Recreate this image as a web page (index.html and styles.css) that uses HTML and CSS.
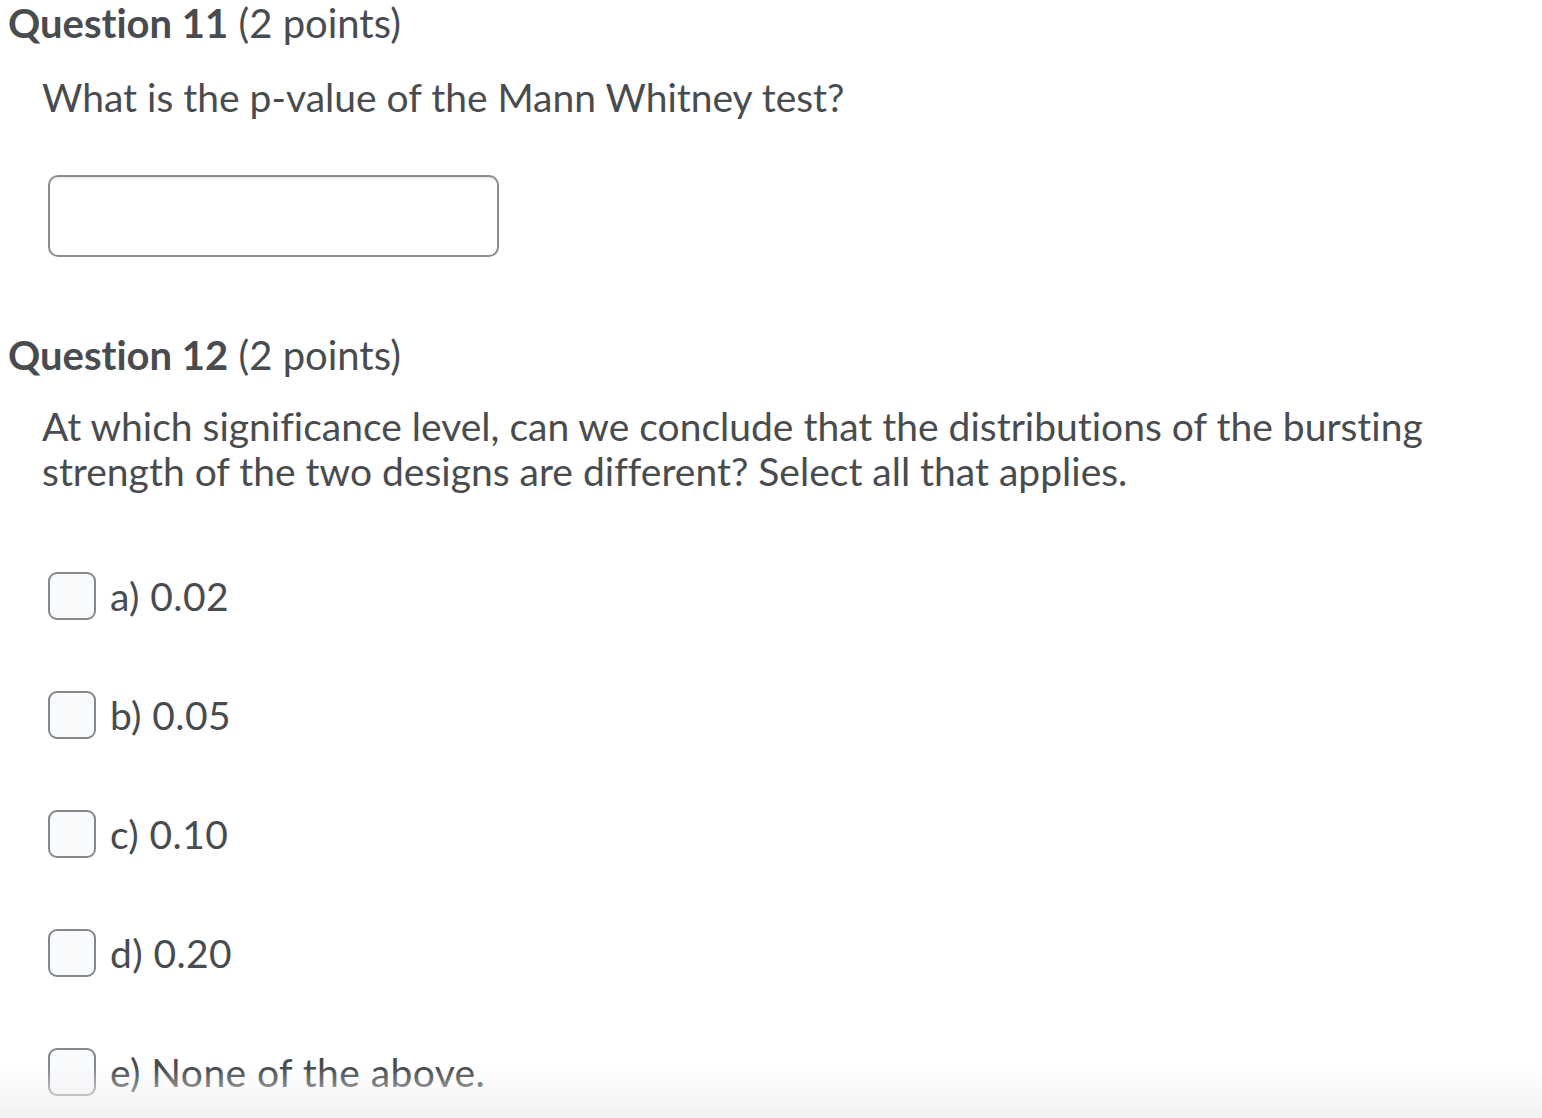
FILE: index.html
```html
<!DOCTYPE html>
<html>
<head>
<meta charset="utf-8">
<link rel="stylesheet" href="styles.css">
</head>
<body>
<div class="page">
  <section class="question q11">
    <h2 class="qhead"><span class="qnum">Question 11</span> (2 points)</h2>
    <div class="qbody">
      <p class="qtext">What is the p-value of the Mann Whitney test?</p>
      <div class="answer-box"></div>
    </div>
  </section>
  <section class="question q12">
    <h2 class="qhead"><span class="qnum">Question 12</span> (2 points)</h2>
    <div class="qbody">
      <p class="qtext">At which significance level, can we conclude that the distributions of the bursting strength of the two designs are different? Select all that applies.</p>
      <ul class="options">
        <li class="option"><span class="check"></span><span class="label">a) 0.02</span></li>
        <li class="option"><span class="check"></span><span class="label">b) 0.05</span></li>
        <li class="option"><span class="check"></span><span class="label">c) 0.10</span></li>
        <li class="option"><span class="check"></span><span class="label">d) 0.20</span></li>
        <li class="option"><span class="check"></span><span class="label">e) None of the above.</span></li>
      </ul>
    </div>
  </section>
</div>
<div class="fade"></div>
</body>
</html>
```
FILE: styles.css
```css
html, body {
  margin: 0;
  padding: 0;
  background: #ffffff;
  height: 100%;
  overflow: hidden;
}
body {
  font-family: Lato, "Open Sans", sans-serif;
  color: #494c4e;
  font-variant-ligatures: none;
}
.page {
  padding: 0 0 0 8px;
}
.qhead {
  margin: 0;
  font-size: 40px;
  font-weight: 400;
  line-height: 46px;
}
.qnum {
  font-weight: 700;
}
.qbody {
  padding-left: 34px;
}
.qtext {
  margin: 0;
  font-size: 39px;
  line-height: 45px;
}
.q11 .qtext {
  margin-top: 28px;
  line-height: 46px;
}
.answer-box {
  margin-top: 55px;
  margin-left: 6px;
  width: 447px;
  height: 78px;
  border: 2px solid #8a8d90;
  border-radius: 10px;
  box-shadow: inset 0 4px 2px -2px #eef0f3;
  background: #fff;
}
.q12 {
  margin-top: 75px;
}
.q12 .qtext {
  margin-top: 26px;
}
.options {
  list-style: none;
  margin: 78px 0 0 6px;
  padding: 0;
}
.option {
  display: flex;
  align-items: center;
  height: 48px;
  margin-bottom: 71px;
}
.check {
  box-sizing: border-box;
  width: 48px;
  height: 48px;
  border: 2px solid #84888c;
  border-radius: 9px;
  background: #f9fafc;
  flex: none;
}
.label {
  margin-left: 14px;
  font-size: 39px;
  letter-spacing: 0.4px;
}
.fade {
  position: fixed;
  left: 0;
  right: 0;
  bottom: 0;
  height: 50px;
  background: linear-gradient(to bottom, rgba(242,242,242,0), #f2f2f2);
  pointer-events: none;
}
```
